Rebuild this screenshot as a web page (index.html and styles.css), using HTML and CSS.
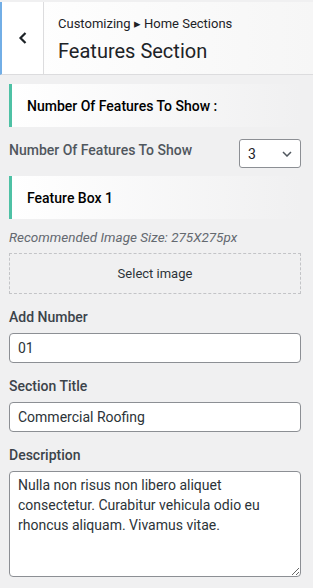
FILE: index.html
```html
<!DOCTYPE html>
<html lang="en">
<head>
    <meta charset="UTF-8">
    <meta name="viewport" content="width=device-width, initial-scale=1.0">
    <title>Features Section</title>
    <link rel="stylesheet" href="styles.css">
</head>
<body>

<div class="panel-header">
    <button class="back-button" aria-label="Back">
        <svg width="12" height="14" viewBox="0 0 12 14"><path d="M8.5 2 L3.5 7 L8.5 12" fill="none" stroke="#1d2327" stroke-width="2.2"/></svg>
    </button>
    <div class="header-title">
        <span class="breadcrumb">Customizing &#9656; Home Sections</span>
        <h2>Features Section</h2>
    </div>
</div>

<div class="controls">
    <div class="group-heading">Number Of Features To Show :</div>

    <div class="inline-row">
        <label for="featureCount">Number Of Features To Show</label>
        <div class="select-box">
            <select id="featureCount">
                <option>3</option>
            </select>
            <svg width="10" height="6" viewBox="0 0 10 6"><path d="M1 1 L5 5 L9 1" fill="none" stroke="#50575e" stroke-width="1.5"/></svg>
        </div>
    </div>

    <div class="group-heading">Feature Box 1</div>

    <p class="note">Recommended Image Size: 275X275px</p>
    <button class="upload-button">Select image</button>

    <label class="field-label" for="addNumber">Add Number</label>
    <input type="text" id="addNumber" value="01">

    <label class="field-label" for="sectionTitle">Section Title</label>
    <input type="text" id="sectionTitle" value="Commercial Roofing">

    <label class="field-label" for="description">Description</label>
    <textarea id="description">Nulla non risus non libero aliquet consectetur. Curabitur vehicula odio eu rhoncus aliquam. Vivamus vitae.</textarea>
</div>

</body>
</html>
```

FILE: styles.css
```css
body {
    font-family: Roboto, 'Liberation Sans', sans-serif;
    background-color: #f0f0f1;
    margin: 0;
    padding: 0;
    color: #1d2327;
}

.panel-header {
    display: flex;
    height: 72px;
    margin-top: 2px;
    background: linear-gradient(to right, #fff, #f6f6f6);
    border-left: 2px solid #72aee6;
    border-bottom: 1px solid #dcdcde;
}

.back-button {
    width: 42px;
    border: none;
    border-right: 1px solid #dcdcde;
    background: #fff;
    display: flex;
    align-items: center;
    justify-content: center;
    padding: 0;
}

.header-title {
    padding: 13px 0 0 14px;
}

.breadcrumb {
    display: block;
    font-size: 13px;
    color: #1d2327;
    line-height: 18px;
}

.header-title h2 {
    margin: 5px 0 0;
    font-size: 20px;
    font-weight: 400;
    line-height: 26px;
}

.controls {
    padding: 9px 12px 0 9px;
}

.group-heading {
    height: 43px;
    display: flex;
    align-items: center;
    padding-left: 15px;
    border-left: 3px solid #4ec1a5;
    background: linear-gradient(to right, #fff, #f0f0f1);
    font-size: 14px;
    font-weight: 500;
    color: #000;
}

.inline-row {
    display: flex;
    align-items: center;
    justify-content: space-between;
    margin: 12px 0 8px;
}

.inline-row label {
    font-size: 14px;
    font-weight: 500;
    color: #50575e;
    margin-top: -8px;
}

.select-box {
    position: relative;
    width: 62px;
    height: 29px;
}

.select-box select {
    width: 100%;
    height: 100%;
    appearance: none;
    border: 1px solid #8c8f94;
    border-radius: 3px;
    background: #fff;
    font-family: inherit;
    font-size: 14px;
    padding: 0 0 0 8px;
    color: #1d2327;
}

.select-box svg {
    position: absolute;
    right: 9px;
    top: 12px;
    pointer-events: none;
}

.note {
    margin: 10px 0 8px;
    font-size: 13.5px;
    line-height: 16px;
    font-style: italic;
    color: #646970;
}

.upload-button {
    display: block;
    width: 100%;
    height: 41px;
    border: 1px dashed #c3c4c7;
    background: transparent;
    font-family: inherit;
    font-size: 13px;
    color: #2c3338;
    cursor: pointer;
}

.field-label {
    display: block;
    margin: 14px 0 7px;
    font-size: 14px;
    font-weight: 500;
    color: #3c434a;
    line-height: 18px;
}

input, textarea {
    display: block;
    width: 100%;
    box-sizing: border-box;
    border: 1px solid #8c8f94;
    border-radius: 4px;
    background: #fff;
    font-family: inherit;
    font-size: 14px;
    color: #2c3338;
    margin: 0;
}

input {
    height: 30px;
    padding: 0 8px;
}

textarea {
    height: 106px;
    padding: 3px 8px;
    line-height: 20px;
    resize: vertical;
}
```
